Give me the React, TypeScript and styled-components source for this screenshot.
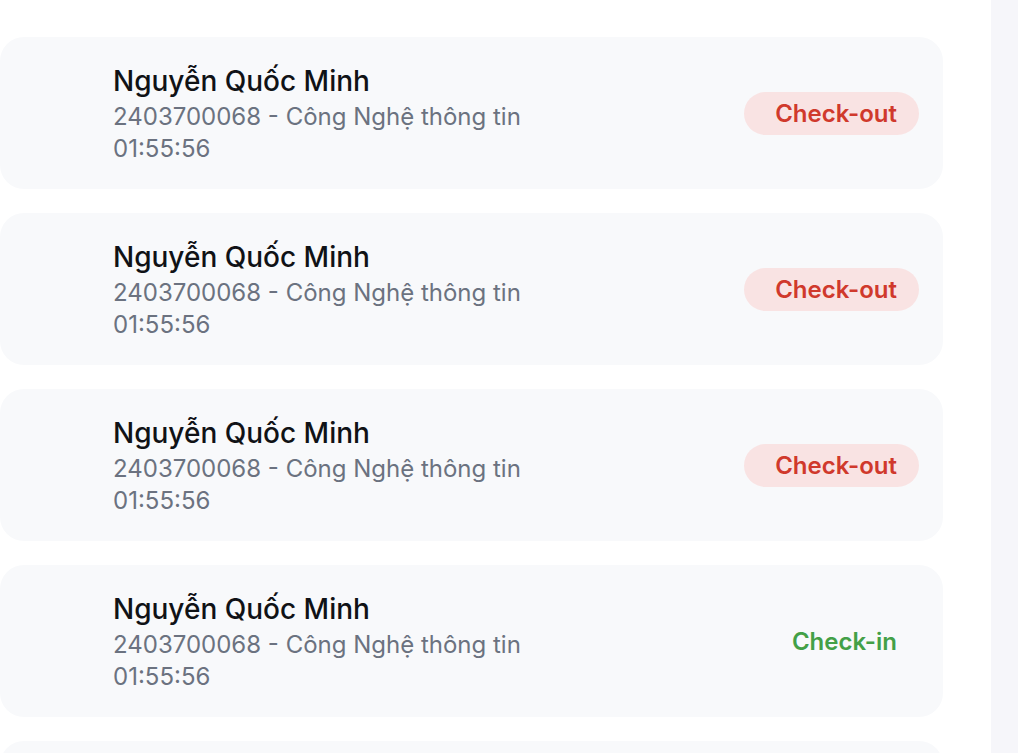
import React from "react";
import styled, { createGlobalStyle } from "styled-components";

const Global = createGlobalStyle`
  html, body { margin: 0; padding: 0; background: #ffffff; }
  body { font-family: Inter, "Noto Sans", sans-serif; height: 753px; overflow: hidden; }
`;

const Layout = styled.div`
  display: flex;
  width: 1018px;
  height: 753px;
  overflow: hidden;
`;

const Main = styled.main`
  flex: 1;
  padding: 37px 48px 0 0;
  display: flex;
  flex-direction: column;
  gap: 24px;
`;

const Side = styled.aside`
  width: 27px;
  background: #f6f6fa;
`;

const Card = styled.div`
  flex: 0 0 152px;
  height: 152px;
  box-sizing: border-box;
  background: #f8f9fb;
  border-radius: 24px;
  display: flex;
  align-items: center;
  justify-content: space-between;
  padding: 0 24px 0 113px;
`;

const Info = styled.div`
  display: flex;
  flex-direction: column;
  margin-top: 2px;
`;

const Name = styled.div`
  font-size: 28px;
  font-weight: 500;
  line-height: 36px;
  padding-bottom: 2px;
  color: #101216;
`;

const Sub = styled.div`
  font-size: 24px;
  line-height: 32px;
  color: #6b7280;
`;

const Badge = styled.span<{ $kind: "in" | "out" }>`
  display: inline-flex;
  align-items: center;
  height: 43px;
  box-sizing: border-box;
  padding: 0 22px 0 31px;
  border-radius: 22px;
  font-size: 24px;
  font-weight: 600;
  background: ${(p) => (p.$kind === "out" ? "#f9e3e3" : "transparent")};
  color: ${(p) => (p.$kind === "out" ? "#d0392c" : "#43a047")};
`;

const rows: { kind: "in" | "out" }[] = [
  { kind: "out" },
  { kind: "out" },
  { kind: "out" },
  { kind: "in" },
  { kind: "out" },
];

export default function App() {
  return (
    <>
      <Global />
      <Layout>
        <Main>
          {rows.map((r, i) => (
            <Card key={i}>
              <Info>
                <Name>Nguyễn Quốc Minh</Name>
                <Sub>2403700068 - Công Nghệ thông tin</Sub>
                <Sub>01:55:56</Sub>
              </Info>
              <Badge $kind={r.kind}>{r.kind === "out" ? "Check-out" : "Check-in"}</Badge>
            </Card>
          ))}
        </Main>
        <Side />
      </Layout>
    </>
  );
}
